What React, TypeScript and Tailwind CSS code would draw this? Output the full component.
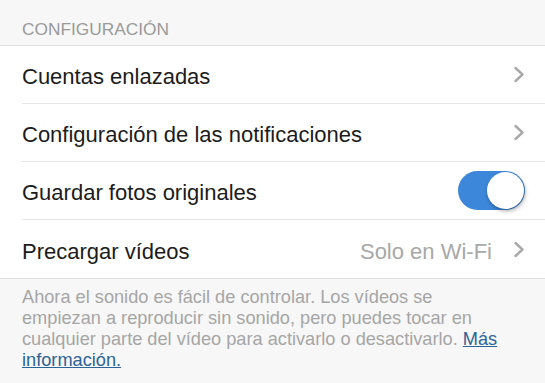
import React from "react";

function Chevron() {
  return (
    <svg width="12" height="17" viewBox="0 0 12 17" className="shrink-0">
      <polyline points="2.5,2 9.5,8.5 2.5,15" fill="none" stroke="#a9a9a9" strokeWidth="2.4" strokeLinecap="round" strokeLinejoin="round" />
    </svg>
  );
}

function Row({ label, right, last }: { label: string; right: React.ReactNode; last?: boolean }) {
  return (
    <div className="pl-[22px]">
      <div className={"flex h-[58px] items-center pr-[20px] " + (last ? "" : "border-b border-[#e6e6e6]")}>
        <span className="mt-[4px] flex-1 text-[22px] text-[#1c1c1c]">{label}</span>
        {right}
      </div>
    </div>
  );
}

export default function App() {
  return (
    <div className="w-[545px] h-[383px] overflow-hidden bg-[#f7f7f7]" style={{ fontFamily: '"Liberation Sans", Arial, sans-serif' }}>
      <div className="h-[46px] border-b border-[#dedede] pl-[22px] pt-[19px] text-[17.3px] leading-[20px] text-[#9a9a9a]">
        CONFIGURACIÓN
      </div>
      <div className="bg-white border-b border-[#dedede]">
        <Row label="Cuentas enlazadas" right={<Chevron />} />
        <Row label="Configuración de las notificaciones" right={<Chevron />} />
        <Row
          label="Guardar fotos originales"
          right={
            <div className="relative h-[39px] w-[67px] rounded-full bg-[#3d87da]">
              <div className="absolute right-[1px] top-[1px] h-[37px] w-[37px] rounded-full bg-white shadow-[1px_2px_4px_rgba(0,0,0,0.35)]" />
            </div>
          }
        />
        <Row
          label="Precargar vídeos"
          last
          right={
            <div className="flex items-center gap-[21px]">
              <span className="mt-[4px] text-[22px] text-[#a8a8a8]">Solo en Wi-Fi</span>
              <Chevron />
            </div>
          }
        />
      </div>
      <div className="pl-[22px] pt-[8px] text-[18.2px] leading-[21px] text-[#a6a6a6] whitespace-nowrap">
        Ahora el sonido es fácil de controlar. Los vídeos se
        <br />
        empiezan a reproducir sin sonido, pero puedes tocar en
        <br />
        cualquier parte del vídeo para activarlo o desactivarlo.{" "}
        <span className="text-[#2d6496] underline">Más</span>
        <br />
        <span className="text-[#2d6496] underline">información.</span>
      </div>
    </div>
  );
}
